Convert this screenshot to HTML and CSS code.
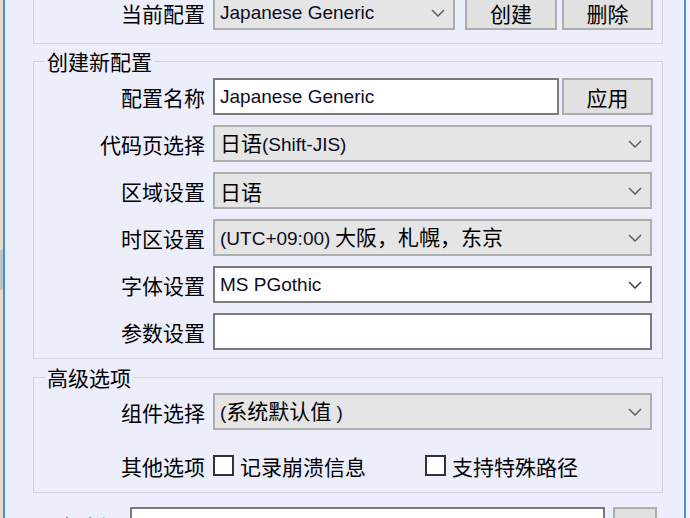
FILE: index.html
```html
<!DOCTYPE html>
<html lang="zh-CN">
<head>
<meta charset="utf-8">
<title>配置</title>
<link rel="stylesheet" href="styles.css">
</head>
<body>
<div class="frame">
  <div class="edge-left"><div class="scroll-nub"></div></div>
  <div class="bar"></div>
  <main class="content">
    <fieldset class="group group-top">
      <div class="row row-top">
        <span class="lbl">当前配置</span>
        <div class="fields">
          <div class="combo combo-cur"><span class="lat">Japanese Generic</span><svg class="chev" viewBox="0 0 14 8" width="14" height="8"><polyline points="1,1 7,7 13,1"/></svg></div>
          <button class="btn btn-create">创建</button>
          <button class="btn btn-del">删除</button>
        </div>
      </div>
    </fieldset>

    <fieldset class="group group-new">
      <legend class="legend">创建新配置</legend>
      <div class="rows">
        <div class="row">
          <span class="lbl">配置名称</span>
          <div class="fields">
            <div class="input input-name"><span class="lat">Japanese Generic</span></div>
            <button class="btn btn-apply">应用</button>
          </div>
        </div>
        <div class="row">
          <span class="lbl">代码页选择</span>
          <div class="fields">
            <div class="combo"><span>日语<span class="lat">(Shift-JIS)</span></span><svg class="chev" viewBox="0 0 14 8" width="14" height="8"><polyline points="1,1 7,7 13,1"/></svg></div>
          </div>
        </div>
        <div class="row">
          <span class="lbl">区域设置</span>
          <div class="fields">
            <div class="combo"><span>日语</span><svg class="chev" viewBox="0 0 14 8" width="14" height="8"><polyline points="1,1 7,7 13,1"/></svg></div>
          </div>
        </div>
        <div class="row">
          <span class="lbl">时区设置</span>
          <div class="fields">
            <div class="combo"><span><span class="lat">(UTC+09:00)</span> 大阪，札幌，东京</span><svg class="chev" viewBox="0 0 14 8" width="14" height="8"><polyline points="1,1 7,7 13,1"/></svg></div>
          </div>
        </div>
        <div class="row">
          <span class="lbl">字体设置</span>
          <div class="fields">
            <div class="combo combo-white"><span class="lat">MS PGothic</span><svg class="chev chev-dark" viewBox="0 0 14 8" width="14" height="8"><polyline points="1,1 7,7 13,1"/></svg></div>
          </div>
        </div>
        <div class="row">
          <span class="lbl">参数设置</span>
          <div class="fields">
            <div class="input"></div>
          </div>
        </div>
      </div>
    </fieldset>

    <fieldset class="group group-adv">
      <legend class="legend">高级选项</legend>
      <div class="rows rows-adv">
        <div class="row">
          <span class="lbl">组件选择</span>
          <div class="fields">
            <div class="combo"><span><span class="lat">(</span>系统默认值<span class="lat"> )</span></span><svg class="chev" viewBox="0 0 14 8" width="14" height="8"><polyline points="1,1 7,7 13,1"/></svg></div>
          </div>
        </div>
        <div class="row">
          <span class="lbl">其他选项</span>
          <div class="fields checks">
            <label class="check check-first"><span class="box"></span><span>记录崩溃信息</span></label>
            <label class="check"><span class="box"></span><span>支持特殊路径</span></label>
          </div>
        </div>
      </div>
    </fieldset>

    <div class="path-row">
      <span class="path-lbl">程序路径</span>
      <div class="input path-input"></div>
      <button class="btn btn-browse">...</button>
    </div>
  </main>
  <div class="bar"></div>
  <div class="edge-right"></div>
</div>
</body>
</html>
```

FILE: styles.css
```css
* {
  box-sizing: border-box;
}

html,
body {
  margin: 0;
  height: 100%;
}

body {
  background: #eceefb;
  font-family: "Noto Sans CJK SC", "Liberation Sans", sans-serif;
  font-size: 21px;
  color: #000;
  overflow: hidden;
}

.frame {
  display: flex;
  width: 690px;
  height: 518px;
  overflow: hidden;
}

.edge-left {
  width: 3px;
  flex-shrink: 0;
  background: #ead9c6;
}

.scroll-nub {
  margin-top: 250px;
  height: 40px;
  background: #c2c2c6;
}

.bar {
  width: 2px;
  flex-shrink: 0;
  background: #3f8fe3;
}

.edge-right {
  width: 4px;
  flex-shrink: 0;
  background: #f3f3fc;
}

.content {
  flex: 1;
  min-width: 0;
  display: flex;
  flex-direction: column;
  padding: 0 21px 0 28px;
}

.group {
  margin: 0;
  min-width: 0;
  padding: 0 10px 8px 0;
  border: 1px solid #d2d3de;
}

.group-top {
  margin-top: -20px;
  padding-top: 15px;
  padding-bottom: 13px;
}

.group-new {
  margin-top: 6px;
  padding-top: 6px;
  padding-bottom: 8px;
}

.group-adv {
  margin-top: 7px;
  padding-top: 5px;
  padding-bottom: 8px;
}

.legend {
  margin-left: 11px;
  padding: 0 2px;
  font-size: 21px;
  line-height: 22px;
}

.rows {
  display: flex;
  flex-direction: column;
  gap: 10px;
}

.rows-adv {
  gap: 17px;
}

.row {
  display: grid;
  grid-template-columns: 171px 1fr;
  column-gap: 8px;
  align-items: center;
  height: 37px;
}

.row-top {
  height: 34px;
}

.lbl {
  text-align: right;
  white-space: nowrap;
  line-height: 24px;
}

.fields {
  display: flex;
  height: 100%;
  min-width: 0;
}

.combo {
  flex: 1;
  display: flex;
  align-items: center;
  justify-content: space-between;
  padding: 0 8px 0 5px;
  background: #e5e5e5;
  border: 2px solid #adadad;
  line-height: 24px;
  white-space: nowrap;
}

.combo-cur {
  flex: 0 0 242px;
}

.combo-white {
  background: #fff;
  border-color: #7a7a7a;
}

.chev {
  flex-shrink: 0;
  fill: none;
  stroke: #606060;
  stroke-width: 1.5;
}

.chev-dark {
  stroke: #404040;
}

.input {
  flex: 1;
  display: flex;
  align-items: center;
  padding: 0 5px;
  background: #fff;
  border: 2px solid #7a7a7a;
  line-height: 24px;
}

.input-name {
  flex: 0 0 346px;
}

.lat {
  font-family: "Liberation Sans", Arial, sans-serif;
  font-size: 19px;
  color: #0c0c24;
}

.btn {
  font: inherit;
  line-height: 24px;
  color: #000;
  padding: 0;
  background: #e1e1e1;
  border: 2px solid #adadad;
  flex-shrink: 0;
}

.btn-create {
  width: 92px;
  margin-left: 10px;
}

.btn-del {
  width: 91px;
  margin-left: 5px;
}

.btn-apply {
  width: 91px;
  margin-left: 3px;
}

.checks {
  align-items: center;
}

.check {
  display: flex;
  align-items: center;
  gap: 6px;
  line-height: 24px;
  white-space: nowrap;
}

.check-first {
  width: 212px;
}

.box {
  width: 21px;
  height: 21px;
  background: #fff;
  border: 2px solid #333;
  flex-shrink: 0;
}

.path-row {
  display: flex;
  height: 37px;
  margin-top: 14px;
  flex-shrink: 0;
}

.path-lbl {
  width: 95px;
  margin-left: 2px;
  padding-top: 7px;
  line-height: 24px;
  white-space: nowrap;
}

.path-input {
  flex: 0 0 475px;
}

.btn-browse {
  width: 44px;
  margin-left: 8px;
  color: #e1e1e1;
}
```
